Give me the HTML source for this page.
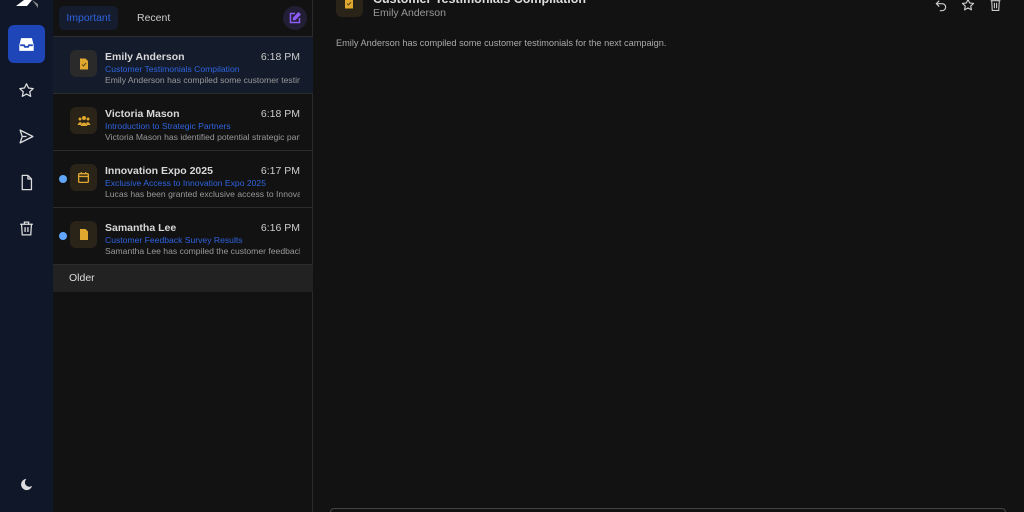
<!DOCTYPE html><html><head><style>
*{margin:0;padding:0;box-sizing:border-box}
html,body{width:1024px;height:512px;overflow:hidden}
body{background:#121212;font-family:"Liberation Sans",sans-serif;position:relative}
.a{position:absolute}
.sb{left:0;top:0;width:53px;height:512px;background:#0f1729}
.list{left:53px;top:0;width:260px;height:512px;background:#121212;border-right:1px solid #2a2a2a}
.row{position:absolute;left:0;width:260px;height:57px;border-bottom:1px solid #2c2c2c}
.av{position:absolute;left:17px;top:13px;width:27px;height:27px;border-radius:6px;display:flex;align-items:center;justify-content:center}
.nm{position:absolute;left:52px;top:14px;font-size:10.5px;color:#d8d8d8;font-weight:bold}
.tm{position:absolute;right:13px;top:14px;font-size:10.5px;color:#ccc}
.sj{position:absolute;left:52px;top:27px;font-size:8.6px;color:#2f63e0;white-space:nowrap}
.pv{position:absolute;left:52px;top:38px;font-size:8.6px;color:#999;white-space:nowrap;width:195px;overflow:hidden}
.dot{position:absolute;left:6px;top:24px;width:8px;height:8px;border-radius:50%;background:#60a5fa}
svg{display:block}
</style></head><body>
<div class="a sb">
 <svg class="a" style="left:14px;top:0" width="24" height="8"><path d="M2 6 L10 0 L18 0 L13 6Z" fill="#fff"/><path d="M18 0 L24 4 L24 8Z" fill="#888"/></svg>
 <div class="a" style="left:8px;top:25px;width:37px;height:38px;background:#1f46b8;border-radius:6px"></div>
 <svg class="a" style="left:17px;top:35px" width="19" height="19" viewBox="0 0 24 24" fill="none" stroke="#fff" stroke-width="2.2"><path d="M4 13 L6 5 H18 L20 13 V19 H4Z" fill="#fff"/><path d="M4 13 H9 L10 15 H14 L15 13 H20" stroke="#1f46b8"/></svg>
 <svg class="a" style="left:18px;top:82px" width="17" height="17" viewBox="0 0 24 24" fill="none" stroke="#ddd" stroke-width="1.8" stroke-linejoin="round"><path d="M12 2.5l2.9 6 6.6.8-4.9 4.5 1.3 6.5L12 17l-5.9 3.3 1.3-6.5-4.9-4.5 6.6-.8z"/></svg>
 <svg class="a" style="left:18px;top:128px" width="17" height="17" viewBox="0 0 24 24" fill="none" stroke="#ddd" stroke-width="1.8" stroke-linejoin="round"><path d="M3 3 L21 12 L3 21 L6 12Z M6 12 H12"/></svg>
 <svg class="a" style="left:18px;top:174px" width="17" height="17" viewBox="0 0 24 24" fill="none" stroke="#ddd" stroke-width="1.8" stroke-linejoin="round"><path d="M6 2 H14 L19 7 V22 H6Z M14 2 V7 H19"/></svg>
 <svg class="a" style="left:18px;top:220px" width="17" height="17" viewBox="0 0 24 24" fill="none" stroke="#ddd" stroke-width="1.8"><path d="M3 6 H21 M9 6 V3 H15 V6 M5 6 L6 21 H18 L19 6 M10 10 V17 M14 10 V17"/></svg>
 <svg class="a" style="left:19px;top:477px" width="15" height="15" viewBox="0 0 24 24"><path d="M12 3 A9 9 0 1 0 21 14 A7 7 0 0 1 12 3Z" fill="#ddd"/></svg>
</div>
<div class="a list">
 <div class="a" style="left:0;top:0;width:260px;height:37px;border-bottom:1px solid #2c2c2c"></div>
 <div class="a" style="left:6px;top:6px;width:59px;height:24px;background:#141c2d;border-radius:5px;color:#2f63e0;font-size:10.5px;line-height:24px;text-align:center">Important</div>
 <div class="a" style="left:84px;top:12px;color:#ccc;font-size:10.5px">Recent</div>
 <div class="a" style="left:230px;top:6px;width:24px;height:24px;border-radius:50%;background:#221e35"></div>
 <svg class="a" style="left:236px;top:12px" width="12" height="12" viewBox="0 0 24 24" fill="none" stroke="#8b5cf6" stroke-width="3"><path d="M12 3 H3 V21 H21 V12"/><path d="M19 2 L22 5 L12 15 H9 V12Z" fill="#8b5cf6"/></svg>
 <div class="row" style="top:37px;background:#141c2b">
  <div class="av" style="background:#2a2a2a"><svg width="12" height="12" viewBox="0 0 24 24"><path d="M4 1 H15 L20 6 V23 H4Z" fill="#e0a82e"/><path d="M8 13 L11 16 L16 10" stroke="#5a4a20" stroke-width="2" fill="none"/></svg></div>
  <div class="nm">Emily Anderson</div><div class="tm">6:18 PM</div>
  <div class="sj">Customer Testimonials Compilation</div><div class="pv">Emily Anderson has compiled some customer testimonials</div>
 </div>
 <div class="row" style="top:94px">
  <div class="av" style="background:#292318"><svg width="14" height="12" viewBox="0 0 28 24" fill="#e0a82e"><circle cx="14" cy="6" r="4"/><circle cx="6" cy="8" r="3"/><circle cx="22" cy="8" r="3"/><path d="M7 22 Q14 8 21 22Z"/><path d="M1 20 Q5 11 10 16 L8 20Z M27 20 Q23 11 18 16 L20 20Z"/></svg></div>
  <div class="nm">Victoria Mason</div><div class="tm">6:18 PM</div>
  <div class="sj">Introduction to Strategic Partners</div><div class="pv">Victoria Mason has identified potential strategic partners</div>
 </div>
 <div class="row" style="top:151px">
  <div class="dot"></div>
  <div class="av" style="background:#292318"><svg width="13" height="13" viewBox="0 0 24 24" fill="none" stroke="#e0a82e" stroke-width="2.5"><rect x="3" y="5" width="18" height="16" rx="2"/><path d="M3 10 H21 M8 2 V6 M16 2 V6"/></svg></div>
  <div class="nm">Innovation Expo 2025</div><div class="tm">6:17 PM</div>
  <div class="sj">Exclusive Access to Innovation Expo 2025</div><div class="pv">Lucas has been granted exclusive access to Innovation Expo</div>
 </div>
 <div class="row" style="top:208px">
  <div class="dot"></div>
  <div class="av" style="background:#292318"><svg width="12" height="13" viewBox="0 0 24 24"><path d="M4 1 H15 L20 6 V23 H4Z" fill="#e0a82e"/></svg></div>
  <div class="nm">Samantha Lee</div><div class="tm">6:16 PM</div>
  <div class="sj">Customer Feedback Survey Results</div><div class="pv">Samantha Lee has compiled the customer feedback survey</div>
 </div>
 <div class="a" style="left:0;top:265px;width:260px;height:27px;background:#222;color:#ddd;font-size:10.5px;line-height:27px;padding-left:16px">Older</div>
</div>
<div class="a" style="left:336px;top:-10px;width:27px;height:27px;border-radius:6px;background:#292318"></div>
<svg class="a" style="left:343px;top:-3px" width="12" height="12" viewBox="0 0 24 24"><path d="M4 1 H15 L20 6 V23 H4Z" fill="#e0a82e"/><path d="M8 13 L11 16 L16 10" stroke="#5a4a20" stroke-width="2" fill="none"/></svg>
<div class="a" style="left:373px;top:-8px;font-size:12.5px;color:#ddd;font-weight:bold">Customer Testimonials Compilation</div>
<div class="a" style="left:373px;top:7px;font-size:10.5px;color:#999">Emily Anderson</div>
<div class="a" style="left:336px;top:38px;font-size:9.2px;color:#aaa">Emily Anderson has compiled some customer testimonials for the next campaign.</div>
<svg class="a" style="left:934px;top:-1px" width="14" height="14" viewBox="0 0 24 24" fill="none" stroke="#ccc" stroke-width="2"><path d="M9 3 L4 8 L9 13 M4 8 H14 A6 6 0 0 1 14 20 H10"/></svg>
<svg class="a" style="left:961px;top:-2px" width="14" height="14" viewBox="0 0 24 24" fill="none" stroke="#ccc" stroke-width="2" stroke-linejoin="round"><path d="M12 2.5l2.9 6 6.6.8-4.9 4.5 1.3 6.5L12 17l-5.9 3.3 1.3-6.5-4.9-4.5 6.6-.8z"/></svg>
<svg class="a" style="left:989px;top:-2px" width="13" height="14" viewBox="0 0 24 24" fill="none" stroke="#ccc" stroke-width="2"><path d="M3 4 H21 M5 4 L6 22 H18 L19 4 M10 8 V18 M14 8 V18"/></svg>
<div class="a" style="left:330px;top:508px;width:676px;height:4px;border:1.5px solid #444;border-bottom:none;border-radius:10px 10px 0 0"></div>
</body></html>
